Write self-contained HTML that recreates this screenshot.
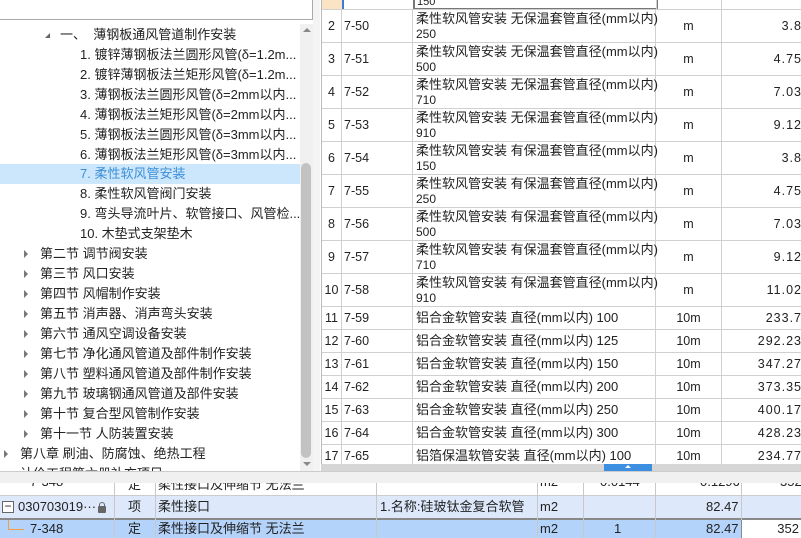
<!DOCTYPE html>
<html><head><meta charset="utf-8"><style>
*{margin:0;padding:0;box-sizing:border-box}
body{width:801px;height:538px;overflow:hidden;background:#fff;font-family:"Liberation Sans","Noto Sans CJK SC",sans-serif;font-size:13px;color:#222;position:relative}
.abs{position:absolute}
.tr{position:absolute;height:20px;line-height:20px;white-space:nowrap;left:0;width:300px;overflow:hidden}
.ar{position:absolute;width:0;height:0}
.right{border-top:4px solid transparent;border-bottom:4px solid transparent;border-left:4px solid #777}
.g{position:absolute;left:321px;width:480px;font-family:"WenQuanYi Zen Hei","Liberation Sans",sans-serif;font-size:12.5px}
.row{position:absolute;left:0;width:480px;border-bottom:1px solid #d0d0d0}
.c{position:absolute;top:0;bottom:0;border-right:1px solid #d0d0d0}
</style></head><body>
<div class="abs" style="left:0;top:0;width:313px;height:20px;border:1px solid #aaa;border-top:none;border-left:none"></div>
<div class="tr" style="top:25px"><div class="ar" style="left:45px;top:8px;border-left:5px solid transparent;border-bottom:5px solid #666"></div><span style="position:absolute;left:60px">一、&nbsp;&nbsp;薄钢板通风管道制作安装</span></div>
<div class="tr" style="top:45px"><span style="position:absolute;left:80px">1. 镀锌薄钢板法兰圆形风管(δ=1.2m...</span></div>
<div class="tr" style="top:65px"><span style="position:absolute;left:80px">2. 镀锌薄钢板法兰矩形风管(δ=1.2m...</span></div>
<div class="tr" style="top:85px"><span style="position:absolute;left:80px">3. 薄钢板法兰圆形风管(δ=2mm以内...</span></div>
<div class="tr" style="top:105px"><span style="position:absolute;left:80px">4. 薄钢板法兰矩形风管(δ=2mm以内...</span></div>
<div class="tr" style="top:125px"><span style="position:absolute;left:80px">5. 薄钢板法兰圆形风管(δ=3mm以内...</span></div>
<div class="tr" style="top:145px"><span style="position:absolute;left:80px">6. 薄钢板法兰矩形风管(δ=3mm以内...</span></div>
<div class="tr" style="top:164px;background:#cce6fb;color:#3b8fd8"><span style="position:absolute;left:80px">7. 柔性软风管安装</span></div>
<div class="tr" style="top:184px"><span style="position:absolute;left:80px">8. 柔性软风管阀门安装</span></div>
<div class="tr" style="top:204px"><span style="position:absolute;left:80px">9. 弯头导流叶片、软管接口、风管检...</span></div>
<div class="tr" style="top:224px"><span style="position:absolute;left:80px">10. 木垫式支架垫木</span></div>
<div class="tr" style="top:244px"><div class="ar right" style="left:24px;top:6px"></div><span style="position:absolute;left:40px">第二节 调节阀安装</span></div>
<div class="tr" style="top:264px"><div class="ar right" style="left:24px;top:6px"></div><span style="position:absolute;left:40px">第三节 风口安装</span></div>
<div class="tr" style="top:284px"><div class="ar right" style="left:24px;top:6px"></div><span style="position:absolute;left:40px">第四节 风帽制作安装</span></div>
<div class="tr" style="top:304px"><div class="ar right" style="left:24px;top:6px"></div><span style="position:absolute;left:40px">第五节 消声器、消声弯头安装</span></div>
<div class="tr" style="top:324px"><div class="ar right" style="left:24px;top:6px"></div><span style="position:absolute;left:40px">第六节 通风空调设备安装</span></div>
<div class="tr" style="top:344px"><div class="ar right" style="left:24px;top:6px"></div><span style="position:absolute;left:40px">第七节 净化通风管道及部件制作安装</span></div>
<div class="tr" style="top:364px"><div class="ar right" style="left:24px;top:6px"></div><span style="position:absolute;left:40px">第八节 塑料通风管道及部件制作安装</span></div>
<div class="tr" style="top:384px"><div class="ar right" style="left:24px;top:6px"></div><span style="position:absolute;left:40px">第九节 玻璃钢通风管道及部件安装</span></div>
<div class="tr" style="top:404px"><div class="ar right" style="left:24px;top:6px"></div><span style="position:absolute;left:40px">第十节 复合型风管制作安装</span></div>
<div class="tr" style="top:424px"><div class="ar right" style="left:24px;top:6px"></div><span style="position:absolute;left:40px">第十一节 人防装置安装</span></div>
<div class="tr" style="top:444px"><div class="ar right" style="left:4px;top:6px"></div><span style="position:absolute;left:20px">第八章 刷油、防腐蚀、绝热工程</span></div>
<div class="tr" style="top:464px;height:7px"><span style="position:absolute;left:20px;top:0">计价工程第六册补充项目</span></div>
<div class="abs" style="left:300px;top:24px;width:13px;height:447px;background:#f0f0f0"></div>
<div class="abs" style="left:303px;top:28px;width:0;height:0;border-left:4px solid transparent;border-right:4px solid transparent;border-bottom:4px solid #888"></div>
<div class="abs" style="left:303px;top:462px;width:0;height:0;border-left:4px solid transparent;border-right:4px solid transparent;border-top:4px solid #888"></div>
<div class="abs" style="left:301px;top:163px;width:10px;height:295px;background:#c2c2c2;border-radius:5px"></div>
<div class="abs" style="left:313px;top:0;width:7px;height:471px;background:#f4f4f4"></div>
<div class="g" style="top:0;height:465px;border-left:1px solid #bbb;overflow:hidden">
  <div class="abs" style="left:0;top:0;width:20px;height:10px;background:#fbe4c4"></div>
  <div class="abs" style="left:20px;top:0;width:2px;height:10px;background:#3a7ad8"></div>
  <div class="abs" style="left:91px;top:-2px;width:245px;height:12px;border:2px solid #777;border-top:none;font-size:11px;line-height:8px;padding-left:2px;overflow:hidden">150</div>
  <div class="abs" style="left:334px;top:0;width:1px;height:10px;background:#d0d0d0"></div>
  <div class="abs" style="left:399px;top:0;width:1px;height:10px;background:#d0d0d0"></div>
  <div class="abs" style="left:0;top:9px;width:480px;height:1px;background:#d0d0d0"></div>
  <div id="rows"></div>
</div>
<div class="abs" style="left:321px;top:464px;width:480px;height:7px;background:#d6d6d6"></div>
<div class="abs" style="left:604px;top:464px;width:48px;height:7px;background:#3c8ee0"></div>
<div class="abs" style="left:625px;top:465px;width:0;height:0;border-left:3px solid transparent;border-right:3px solid transparent;border-bottom:3px solid #fff"></div>
<div class="abs" style="left:0;top:471px;width:801px;height:12px;background:#f0f0f0;border-top:1px solid #ccc"></div>
<div class="abs" style="left:0;top:483px;width:801px;height:13px;overflow:hidden;border-bottom:1px solid #ccc;font-family:'WenQuanYi Zen Hei','Liberation Sans',sans-serif;font-size:13px">
  <div style="position:absolute;top:-9px;left:30px">7-348</div><div style="position:absolute;top:-9px;left:128px">定</div><div style="position:absolute;top:-9px;left:158px">柔性接口及伸缩节 无法兰</div><div style="position:absolute;top:-9px;left:540px">m2</div><div style="position:absolute;top:-9px;left:600px">0.0144</div><div style="position:absolute;top:-9px;left:700px">0.1296</div><div style="position:absolute;top:-9px;left:780px">352</div>
</div>
<div class="abs" style="left:0;top:496px;width:801px;height:22px;background:#dde9fb;font-family:'WenQuanYi Zen Hei','Liberation Sans',sans-serif;font-size:13px;line-height:22px">
  <div class="abs" style="left:2px;top:5px;width:12px;height:12px;border:1px solid #666;background:#fff;line-height:9px;text-align:center;font-size:12px">−</div>
  <span class="abs" style="left:18px">030703019···</span>
  <div class="abs" style="left:98px;top:10px;width:8px;height:7px;background:#666;border-radius:1px"></div>
  <div class="abs" style="left:99px;top:6px;width:6px;height:6px;border:1.5px solid #666;border-radius:3px 3px 0 0;border-bottom:none"></div>
  <span class="abs" style="left:128px">项</span><span class="abs" style="left:158px">柔性接口</span><span class="abs" style="left:380px">1.名称:硅玻钛金复合软管</span><span class="abs" style="left:540px">m2</span><span class="abs" style="left:706px">82.47</span>
</div>
<div class="abs" style="left:0;top:518px;width:801px;height:2px;background:#888"></div>
<div class="abs" style="left:0;top:520px;width:801px;height:18px;background:#b4d3fb;font-family:'WenQuanYi Zen Hei','Liberation Sans',sans-serif;font-size:13px;line-height:18px">
  <div class="abs" style="left:8px;top:0;width:1px;height:9px;background:#f0a040"></div>
  <div class="abs" style="left:8px;top:9px;width:16px;height:1px;background:#f0a040"></div>
  <span class="abs" style="left:30px">7-348</span><span class="abs" style="left:128px">定</span><span class="abs" style="left:158px">柔性接口及伸缩节 无法兰</span><span class="abs" style="left:540px">m2</span><span class="abs" style="left:614px">1</span><span class="abs" style="left:706px">82.47</span>
  <div class="abs" style="left:741px;top:0;width:60px;height:18px;background:#fff;border-left:1px solid #888;text-align:right;padding-right:2px">352</div>
</div>
<div class="abs" style="left:114px;top:483px;width:1px;height:55px;background:#c8c8c8"></div>
<div class="abs" style="left:155px;top:483px;width:1px;height:55px;background:#c8c8c8"></div>
<div class="abs" style="left:376px;top:483px;width:1px;height:55px;background:#c8c8c8"></div>
<div class="abs" style="left:537px;top:483px;width:1px;height:55px;background:#c8c8c8"></div>
<div class="abs" style="left:583px;top:483px;width:1px;height:55px;background:#c8c8c8"></div>
<div class="abs" style="left:655px;top:483px;width:1px;height:55px;background:#c8c8c8"></div>
<div class="abs" style="left:741px;top:483px;width:1px;height:37px;background:#c8c8c8"></div>
<script>
var d=[["2","7-50","柔性软风管安装 无保温套管直径(mm以内)","250","m","3.8"],
["3","7-51","柔性软风管安装 无保温套管直径(mm以内)","500","m","4.75"],
["4","7-52","柔性软风管安装 无保温套管直径(mm以内)","710","m","7.03"],
["5","7-53","柔性软风管安装 无保温套管直径(mm以内)","910","m","9.12"],
["6","7-54","柔性软风管安装 有保温套管直径(mm以内)","150","m","3.8"],
["7","7-55","柔性软风管安装 有保温套管直径(mm以内)","250","m","4.75"],
["8","7-56","柔性软风管安装 有保温套管直径(mm以内)","500","m","7.03"],
["9","7-57","柔性软风管安装 有保温套管直径(mm以内)","710","m","9.12"],
["10","7-58","柔性软风管安装 有保温套管直径(mm以内)","910","m","11.02"],
["11","7-59","铝合金软管安装 直径(mm以内) 100","","10m","233.7"],
["12","7-60","铝合金软管安装 直径(mm以内) 125","","10m","292.23"],
["13","7-61","铝合金软管安装 直径(mm以内) 150","","10m","347.27"],
["14","7-62","铝合金软管安装 直径(mm以内) 200","","10m","373.35"],
["15","7-63","铝合金软管安装 直径(mm以内) 250","","10m","400.17"],
["16","7-64","铝合金软管安装 直径(mm以内) 300","","10m","428.23"],
["17","7-65","铝箔保温软管安装 直径(mm以内) 100","","10m","234.77"]];
var h='',y=10;
d.forEach(function(r){var H=r[3]?33:23;
var t=r[3]?'<div style="position:absolute;left:94px;top:1px;line-height:15px;font-size:13px;white-space:nowrap">'+r[2]+'<br><span style="font-size:12px">'+r[3]+'</span></div>':'<div style="position:absolute;left:94px;top:0;line-height:'+(H-1)+'px;font-size:13px;white-space:nowrap">'+r[2]+'</div>';
h+='<div class="row" style="top:'+y+'px;height:'+H+'px;line-height:'+(H-1)+'px">'+
'<div class="c" style="left:0;width:20px;text-align:center">'+r[0]+'</div>'+
'<div class="c" style="left:20px;width:71px;padding-left:2px">'+r[1]+'</div>'+
'<div class="c" style="left:91px;width:243px"></div>'+t+
'<div class="c" style="left:334px;width:66px;text-align:center">'+r[4]+'</div>'+
'<div style="position:absolute;left:400px;width:80px;text-align:right;letter-spacing:1px">'+r[5]+'</div></div>';
y+=H;});
document.getElementById('rows').innerHTML=h;
</script>
</body></html>
